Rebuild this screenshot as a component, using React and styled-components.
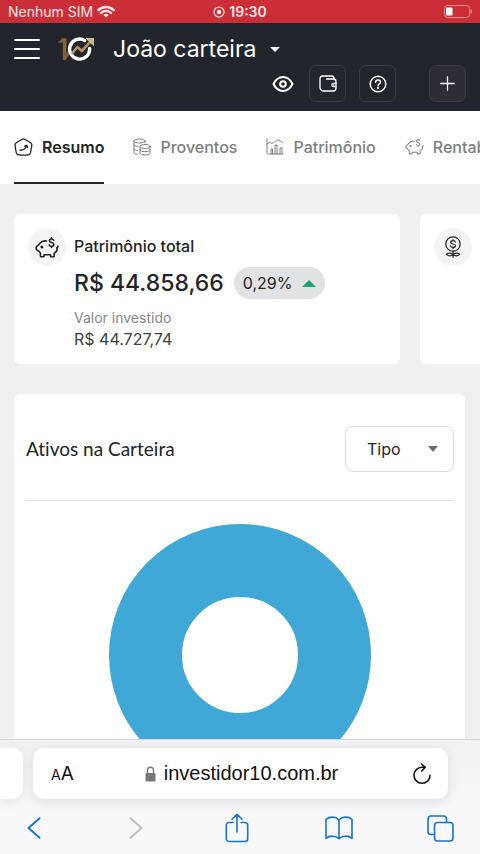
import React from "react";
import styled, { createGlobalStyle } from "styled-components";

const GlobalStyle = createGlobalStyle`
  *, *::before, *::after { box-sizing: border-box; }
  body {
    margin: 0;
    background: #f0eff2;
    color: #222428;
    font-family: Inter, "Liberation Sans", sans-serif;
  }
  button, select { font: inherit; color: inherit; }
  h1, h2, p { margin: 0; font-weight: 400; }
`;

const Screen = styled.div`
  display: flex;
  flex-direction: column;
  height: 100vh;
  overflow: hidden;
`;

const Svg = styled.svg`
  display: block;
  flex: none;
  fill: none;
  stroke: currentColor;
  stroke-linecap: round;
  stroke-linejoin: round;
`;

const PlainButton = styled.button`
  display: flex;
  align-items: center;
  justify-content: center;
  padding: 0;
  border: 0;
  background: none;
  cursor: pointer;
`;

/* Status bar */
const StatusBar = styled.div`
  flex: none;
  display: grid;
  grid-template-columns: 1fr auto 1fr;
  align-items: center;
  height: 23px;
  padding: 0 8px;
  background: #cb2e37;
  color: #fbe9e6;
  font-size: 14px;
  line-height: 20px;
`;

const StatusGroup = styled.div`
  display: flex;
  align-items: center;
  gap: 4px;
  justify-content: ${(p) => p.$align || "flex-start"};
  font-weight: ${(p) => (p.$strong ? 600 : 400)};
`;

/* Site header */
const Header = styled.header`
  flex: none;
  height: 88px;
  padding: 5px 14px 9px;
  background: #23252c;
  color: #fff;
`;

const HeaderRow = styled.div`
  display: flex;
  align-items: center;
  height: 42px;
`;

const Logo = styled.a`
  display: block;
  margin: 0 18px;
`;

const WalletButton = styled(PlainButton)`
  gap: 14px;
  font-size: 23px;
  line-height: 32px;
`;

const Tools = styled.div`
  display: flex;
  align-items: center;
  justify-content: flex-end;
  margin-top: -5px;
`;

const ToolButton = styled(PlainButton)`
  width: 37px;
  height: 37px;
  margin-left: ${(p) => p.$gap || 13}px;
  border: 1px solid ${(p) => (p.$bare ? "transparent" : "#3a3b43")};
  border-radius: 7px;
  background: ${(p) => (p.$filled ? "#2c2d35" : "transparent")};
`;

/* Tabs */
const Tabs = styled.nav`
  flex: none;
  display: flex;
  gap: 29px;
  height: 73px;
  padding: 0 14px;
  overflow: hidden;
  background: #fff;
`;

const Tab = styled.a`
  flex: none;
  display: flex;
  align-items: center;
  gap: 9px;
  border-bottom: 2px solid ${(p) => (p.$active ? "#222428" : "transparent")};
  color: ${(p) => (p.$active ? "#222428" : "#7b7f84")};
  font-size: 16px;
  font-weight: ${(p) => (p.$active ? 600 : 500)};
  text-decoration: none;
`;

/* Page content */
const Content = styled.main`
  flex: 1;
  min-height: 0;
  overflow: hidden;
  padding: 30px 0 0 14px;
`;

const CardStrip = styled.section`
  display: flex;
  gap: 20px;
  overflow: hidden;
`;

const Card = styled.article`
  flex: 0 0 calc(100% - 80px);
  display: flex;
  gap: 8px;
  min-height: 150px;
  padding: 14px;
  border-radius: 6px;
  background: #fff;
`;

const IconDisc = styled.div`
  flex: none;
  display: flex;
  align-items: center;
  justify-content: center;
  width: 38px;
  height: 38px;
  border-radius: 50%;
  background: #f4f4f5;
`;

const CardBody = styled.div`
  padding-top: 6px;
`;

const CardTitle = styled.h2`
  font-size: 16px;
  font-weight: 500;
  line-height: 24px;
`;

const AmountRow = styled.div`
  display: flex;
  align-items: center;
  gap: 10px;
  margin-top: 9px;
`;

const Amount = styled.p`
  font-size: 23px;
  font-weight: 500;
  line-height: 32px;
`;

const Badge = styled.span`
  display: flex;
  align-items: center;
  gap: 10px;
  height: 32px;
  padding: 0 9px;
  border-radius: 16px;
  background: #e1e2e3;
  font-size: 16px;
`;

const Caption = styled.p`
  margin-top: 8px;
  color: #86878b;
  font-size: 14px;
  line-height: 22px;
`;

const Invested = styled.p`
  color: #3c3e42;
  font-size: 16px;
  line-height: 20px;
`;

const Panel = styled.section`
  margin: 30px 15px 0 0;
  padding: 32px 11px 24px 12px;
  border-radius: 6px;
  background: #fff;
`;

const PanelHeader = styled.div`
  display: flex;
  align-items: center;
  justify-content: space-between;
  padding-bottom: 28px;
  border-bottom: 1px solid #dcdcdf;
`;

const PanelTitle = styled.h2`
  font-family: Lato, Inter, sans-serif;
  font-size: 19px;
  font-variant-ligatures: none;
  line-height: 24px;
`;

const SelectBox = styled.label`
  display: grid;
  align-items: center;
  width: 109px;
  height: 46px;

  > * { grid-area: 1 / 1; }
  > svg { justify-self: end; margin-right: 16px; pointer-events: none; }
`;

const Select = styled.select`
  appearance: none;
  width: 100%;
  height: 100%;
  padding: 0 32px 0 21px;
  border: 1px solid #dcdcdf;
  border-radius: 8px;
  background: #fff;
  font-size: 16px;
`;

const Donut = styled.svg`
  display: block;
  width: 262px;
  height: 262px;
  margin: 23px auto 0;
`;

/* Browser bar */
const BrowserBar = styled.footer`
  flex: none;
  height: 115px;
  border-top: 1px solid #d8d8da;
  background: linear-gradient(#f1f1f3, #f8f8fa 60%);
  overflow: hidden;
`;

const AddressRow = styled.div`
  display: flex;
  gap: 10px;
  padding: 8px 32px 0 0;
`;

const AddressPill = styled.div`
  flex: 1;
  display: grid;
  grid-template-columns: 1fr auto 1fr;
  align-items: center;
  height: 51px;
  padding: 0 16px 0 18px;
  border-radius: 11px;
  background: #fff;
  color: #111;
  box-shadow: 0 3px 12px rgba(0, 0, 0, 0.1);
`;

const NeighbourPill = styled.div`
  width: 23px;
  height: 51px;
  border-radius: 0 11px 11px 0;
  background: #fff;
  box-shadow: 0 3px 12px rgba(0, 0, 0, 0.08);
`;

const TextSizeButton = styled(PlainButton)`
  justify-self: start;
  align-items: baseline;
  font-size: 19px;

  small { font-size: 14px; }
`;

const Address = styled(PlainButton)`
  gap: 8px;
  font-family: "Liberation Sans", sans-serif;
  font-size: 20px;
`;

const ReloadButton = styled(PlainButton)`
  justify-self: end;
`;

const BrowserTools = styled.div`
  display: flex;
  align-items: center;
  justify-content: space-between;
  height: 56px;
  padding: 2px 26px 0 20px;
`;

const BrowserTool = styled(PlainButton)`
  width: 28px;
  height: 32px;
  color: ${(p) => (p.disabled ? "#bdbdc1" : "#1673d1")};
`;

const WifiIcon = () => (
  <Svg width="18" height="13" viewBox="0 0 18 13" strokeWidth="2.4" strokeLinecap="butt">
    <path d="M1.2 5.2a11 11 0 0 1 15.6 0M4 8a7 7 0 0 1 10 0" />
    <path d="M9 12.6 6.4 10a3.7 3.7 0 0 1 5.2 0Z" fill="currentColor" stroke="none" />
  </Svg>
);

const RecordIcon = () => (
  <Svg width="12" height="12" viewBox="0 0 12 12" strokeWidth="1.2">
    <circle cx="6" cy="6" r="5" />
    <circle cx="6" cy="6" r="2.2" fill="currentColor" stroke="none" />
  </Svg>
);

const BatteryIcon = () => (
  <Svg width="28" height="13" viewBox="0 0 28 13">
    <rect x=".5" y=".5" width="25" height="12" rx="3" stroke="#e58d90" />
    <path d="M27.2 5v3" stroke="#e58d90" strokeWidth="1.4" />
    <rect x="2" y="2.5" width="6.5" height="8" rx="1" fill="#fff" stroke="none" />
  </Svg>
);

const MenuIcon = () => (
  <Svg width="26" height="20" viewBox="0 0 26 20" strokeWidth="2">
    <path d="M1 1h24M1 10h24M1 19h24" />
  </Svg>
);

const LogoIcon = () => (
  <Svg width="37" height="24" viewBox="0 0 37 24" strokeLinecap="butt" strokeLinejoin="miter">
    <path d="M0 5.6 4.4 1.200h4v13.600L7.200 22.800H4.800V5.200L3 5.800Z" fill="#85613f" stroke="none" />
    <path d="m6.600 22 5.200-8.200" stroke="#85613f" strokeWidth="2.600" />
    <path d="M26.600 3.400A10 10 0 1 0 31.600 11.500" stroke="#fff" strokeWidth="3.400" />
    <path d="m14.500 15.800 5-5.800 4.300 4 9-9.800" stroke="#b69062" strokeWidth="2.600" />
    <path d="M27.500 1H36v8.200l-2.800-2.400-3.200-3Z" fill="#cdb783" stroke="none" />
  </Svg>
);

const CaretIcon = ({ width = 10, height = 5, color = "currentColor", up }) => (
  <Svg width={width} height={height} viewBox="0 0 10 5" preserveAspectRatio="none">
    <path d={up ? "M0 5 5 0l5 5Z" : "M0 0h10L5 5Z"} fill={color} stroke="none" />
  </Svg>
);

const EyeIcon = () => (
  <Svg width="22" height="18" viewBox="0 0 22 18" strokeWidth="2">
    <path d="M1.5 9C3.6 4.700 7 2 11 2s7.400 2.700 9.500 7c-2.100 4.300-5.500 7-9.500 7S3.600 13.300 1.500 9Z" />
    <circle cx="11" cy="9" r="2.800" />
  </Svg>
);

const WalletIcon = () => (
  <Svg width="18" height="17" viewBox="0 0 18 17" strokeWidth="1.3">
    <path d="M15 4V3.500A2.500 2.500 0 0 0 12.500 1H4a3 3 0 0 0-3 3v8.500A3.500 3.500 0 0 0 4.500 16H14a3 3 0 0 0 3-3V6.500A2.500 2.500 0 0 0 14.500 4H7.500" />
    <path d="M17 8.200h-2.500a1.700 1.700 0 0 0 0 3.400H17" strokeWidth="1.100" />
    <circle cx="14.600" cy="9.900" r=".3" />
  </Svg>
);

const HelpIcon = () => (
  <Svg width="18" height="18" viewBox="0 0 18 18" strokeWidth="1.5">
    <circle cx="9" cy="9" r="7.800" />
    <path d="M6.600 7.200C6.600 5.800 7.600 5 9 5s2.500.9 2.500 2.200c0 1.700-2.500 1.800-2.500 3.500" />
    <circle cx="9" cy="13" r=".4" />
  </Svg>
);

const PlusIcon = () => (
  <Svg width="15" height="15" viewBox="0 0 15 15" strokeWidth="1.300">
    <path d="M7.500 .7v13.600M.7 7.500h13.600" />
  </Svg>
);

const SummaryIcon = () => (
  <Svg width="19" height="18" viewBox="0 0 19 18" strokeWidth="1.3">
    <path d="M8.100 1.200Q9.400.5 10.700 1.200l5.900 3.600q1.400.9 1.200 2.500l-1.200 7.200q-.4 2.200-2.600 2.400-4.600.4-9.200 0-2.200-.2-2.600-2.400L1 7.300Q.8 5.700 2.200 4.800Z" />
    <path d="M5.800 12.200c3.200.4 5.800-1.500 7-4.600M10.600 8.100l2.300-.7.800 2.200" />
  </Svg>
);

const CoinsIcon = () => (
  <Svg width="18" height="18" viewBox="0 0 18 18" strokeWidth="1">
    <ellipse cx="6.500" cy="3" rx="5.500" ry="2" />
    <path d="M1 3v11.500c0 .9 1.500 1.600 3.400 1.900M12 3v2M1 6.800c0 .9 1.500 1.600 3.400 1.900M1 10.700c0 .9 1.500 1.600 3.400 1.900" />
    <ellipse cx="12" cy="8.500" rx="5" ry="2" />
    <path d="M7 8.500V15c0 1.100 2.200 2 5 2s5-.9 5-2V8.500M7 11.700c0 1.100 2.200 2 5 2s5-.9 5-2" />
  </Svg>
);

const ChartIcon = () => (
  <Svg width="18" height="17" viewBox="0 0 18 17" strokeWidth="1">
    <path d="M1 1v13.500q0 1.500 1.500 1.500H17M1.500 5.500C4 3 6 7 8.500 4S12.500 1.500 17 4.500M5 16v-5h1.500v5M9 16V7h2v9M14 16v-6h2v6" />
  </Svg>
);

const PiggyIcon = ({ width, height, weight = 1.3 }) => (
  <Svg width={width} height={height} viewBox="0 0 24 21" strokeWidth={weight}>
    <path d="M11.500 4C8.200 3.600 6.200 4.600 5 6.200 4 7.800 3.400 8.400 2.200 9Q1 9.800 1 11.200c0 1.300.7 1.900 2.200 2.500 1 .4 1.300 1.500 2.200 2.200v3.200q0 .7.700.7h2.200q.7 0 .7-.7v-1.300h6.600v1.300q0 .7.700.7h2.200q.7 0 .7-.7v-2.800c2.300-1.300 3.300-3.400 2.600-5.600M21.800 10.700c.9-.2 1.200-.8 1.100-1.600" />
    <circle cx="6.900" cy="9.900" r=".7" fill="currentColor" />
    <path d="M18.600 3.200c-.3-.8-1-1.200-2-1.200-1.300 0-2.200.7-2.200 1.800 0 2.400 4.400 1.200 4.400 3.700 0 1.100-1 1.800-2.300 1.800-1.200 0-2-.5-2.300-1.400M16.500.8V2M16.500 9.300v1.200" />
  </Svg>
);

const CoinPlantIcon = () => (
  <Svg width="16" height="22" viewBox="0 0 16 22" strokeWidth="1.200">
    <circle cx="8" cy="8" r="7.200" />
    <path d="M10.400 6.200C10.200 5.200 9.300 4.700 8 4.700c-1.400 0-2.400.6-2.400 1.600C5.600 8.600 10.500 7.400 10.500 9.700c0 1-1.100 1.700-2.500 1.700s-2.400-.6-2.600-1.600M8 3.700v1M8 11.400v1M8 15.200v6M8 18.600C6 16.600 3 16.600 1.300 18.200 2.800 20.200 6 20.300 8 18.600Zm0 0c2-2 5-2 6.700-.4C13.200 20.200 10 20.300 8 18.600Z" />
  </Svg>
);

const LockIcon = () => (
  <Svg width="11" height="16" viewBox="0 0 11 16" strokeWidth="1.400">
    <path d="M2.500 8V4.200a3 3 0 0 1 6 0V8" stroke="#77787b" />
    <rect x=".5" y="7" width="10" height="8.500" rx="1.300" fill="#77787b" stroke="none" />
  </Svg>
);

const ReloadIcon = () => (
  <Svg width="20" height="22" viewBox="0 0 20 22" strokeWidth="1.600">
    <path d="M13 4.300H10A8 8 0 1 0 18 12.300M9.500 1l3.800 3.300-3.500 3.600" />
  </Svg>
);

const BackIcon = () => (
  <Svg width="14" height="22" viewBox="0 0 14 22" strokeWidth="1.900">
    <path d="M12.500 1.200 1.500 11l11 9.800" />
  </Svg>
);

const ForwardIcon = () => (
  <Svg width="14" height="22" viewBox="0 0 14 22" strokeWidth="1.900">
    <path d="m1.500 1.200 11 9.800-11 9.800" />
  </Svg>
);

const ShareIcon = () => (
  <Svg width="24" height="30" viewBox="0 0 24 30" strokeWidth="1.600">
    <path d="M8 9.500H4A2.700 2.700 0 0 0 1.300 12.200v13.600A2.700 2.700 0 0 0 4 28.500h16a2.700 2.700 0 0 0 2.700-2.700V12.200A2.700 2.700 0 0 0 20 9.500h-4M12 19V1.500M7 6.300l5-5 5 5" />
  </Svg>
);

const BookIcon = () => (
  <Svg width="28" height="24" viewBox="0 0 28 24" strokeWidth="1.600">
    <path d="M14 3.700C10.500.3 4.500.3 1 3.400v19c3.500-3 9.500-3 13 .2 3.500-3.200 9.500-3.200 13-.2v-19C23.500.3 17.500.3 14 3.700Zm0 0v18.900" />
  </Svg>
);

const WindowsIcon = () => (
  <Svg width="27" height="27" viewBox="0 0 27 27" strokeWidth="1.600">
    <rect x="7.500" y="7.500" width="18.500" height="18.500" rx="3" />
    <path d="M7.500 19.500H4a3 3 0 0 1-3-3V4a3 3 0 0 1 3-3h12.500a3 3 0 0 1 3 3v3.500" />
  </Svg>
);

const tabs = [
  { label: "Resumo", icon: <SummaryIcon />, active: true },
  { label: "Proventos", icon: <CoinsIcon /> },
  { label: "Patrimônio", icon: <ChartIcon /> },
  { label: "Rentabilidade", icon: <PiggyIcon width={19} height={17} /> },
];

export default function App() {
  return (
    <Screen>
      <GlobalStyle />
      <StatusBar>
        <StatusGroup>
          Nenhum SIM
          <WifiIcon />
        </StatusGroup>
        <StatusGroup $strong>
          <RecordIcon />
          19:30
        </StatusGroup>
        <StatusGroup $align="flex-end">
          <BatteryIcon />
        </StatusGroup>
      </StatusBar>

      <Header>
        <HeaderRow>
          <PlainButton aria-label="Menu"><MenuIcon /></PlainButton>
          <Logo href="#" aria-label="Investidor10"><LogoIcon /></Logo>
          <WalletButton>
            João carteira
            <CaretIcon />
          </WalletButton>
        </HeaderRow>
        <Tools>
          <ToolButton $bare aria-label="Ocultar valores"><EyeIcon /></ToolButton>
          <ToolButton $gap={8} aria-label="Carteiras"><WalletIcon /></ToolButton>
          <ToolButton aria-label="Ajuda"><HelpIcon /></ToolButton>
          <ToolButton $gap={33} $filled aria-label="Adicionar"><PlusIcon /></ToolButton>
        </Tools>
      </Header>

      <Tabs>
        {tabs.map((tab) => (
          <Tab key={tab.label} href="#" $active={tab.active}>
            {tab.icon}
            {tab.label}
          </Tab>
        ))}
      </Tabs>

      <Content>
        <CardStrip>
          <Card>
            <IconDisc><PiggyIcon width={24} height={21} weight={1.6} /></IconDisc>
            <CardBody>
              <CardTitle>Patrimônio total</CardTitle>
              <AmountRow>
                <Amount>R$ 44.858,66</Amount>
                <Badge>
                  0,29%
                  <CaretIcon up width={14} height={7} color="#1ca672" />
                </Badge>
              </AmountRow>
              <Caption>Valor investido</Caption>
              <Invested>R$ 44.727,74</Invested>
            </CardBody>
          </Card>
          <Card>
            <IconDisc><CoinPlantIcon /></IconDisc>
          </Card>
        </CardStrip>

        <Panel>
          <PanelHeader>
            <PanelTitle>Ativos na Carteira</PanelTitle>
            <SelectBox>
              <Select aria-label="Agrupar por" defaultValue="Tipo">
                <option>Tipo</option>
              </Select>
              <CaretIcon width={10} height={6} color="#6b6c70" />
            </SelectBox>
          </PanelHeader>
          <Donut viewBox="0 0 262 262" role="img" aria-label="Ativos na Carteira">
            <circle cx="131" cy="131" r="94.500" fill="none" stroke="#40a8d7" strokeWidth="73" />
          </Donut>
        </Panel>
      </Content>

      <BrowserBar>
        <AddressRow>
          <NeighbourPill />
          <AddressPill>
            <TextSizeButton aria-label="Tamanho do texto"><small>A</small>A</TextSizeButton>
            <Address>
              <LockIcon />
              investidor10.com.br
            </Address>
            <ReloadButton aria-label="Recarregar"><ReloadIcon /></ReloadButton>
          </AddressPill>
        </AddressRow>
        <BrowserTools>
          <BrowserTool aria-label="Voltar"><BackIcon /></BrowserTool>
          <BrowserTool disabled aria-label="Avançar"><ForwardIcon /></BrowserTool>
          <BrowserTool aria-label="Compartilhar"><ShareIcon /></BrowserTool>
          <BrowserTool aria-label="Favoritos"><BookIcon /></BrowserTool>
          <BrowserTool aria-label="Abas"><WindowsIcon /></BrowserTool>
        </BrowserTools>
      </BrowserBar>
    </Screen>
  );
}
